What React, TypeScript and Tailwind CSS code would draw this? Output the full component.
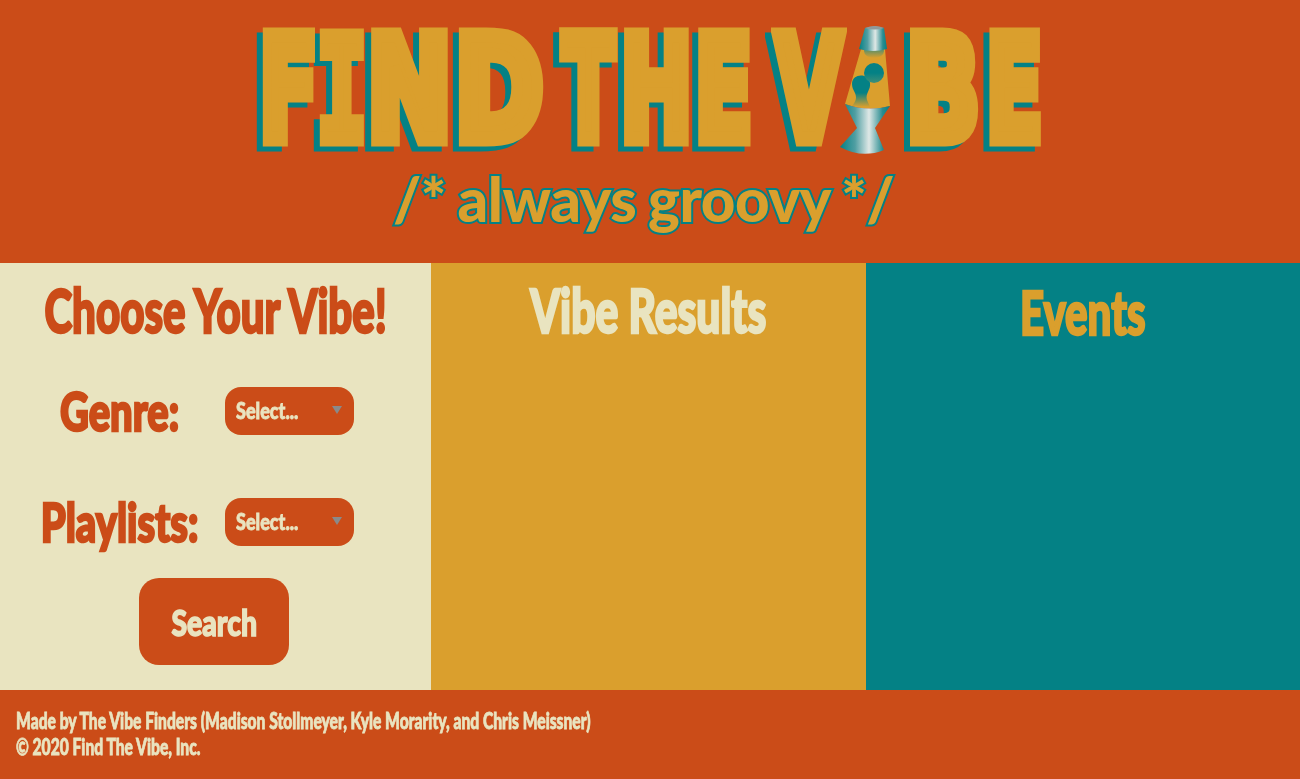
const selectOptions = ["Genre:", "Playlists:"];

function LavaLamp() {
  return (
    <svg width="80" height="145" viewBox="0 0 80 145" className="shrink-0 -ml-[19px] -mr-[7px] -mt-[10px]">
      <defs>
        <linearGradient id="metal" x1="0" y1="0" x2="1" y2="0">
          <stop offset="0" stopColor="#048185" />
          <stop offset="0.3" stopColor="#4f9ea2" />
          <stop offset="0.58" stopColor="#dfe8e6" />
          <stop offset="0.85" stopColor="#2a8d91" />
          <stop offset="1" stopColor="#048185" />
        </linearGradient>
        <linearGradient id="lavaBall" x1="0" y1="0" x2="0" y2="1">
          <stop offset="0.5" stopColor="#048185" />
          <stop offset="1" stopColor="#3f8f78" />
        </linearGradient>
        <linearGradient id="lavaFoot" x1="0" y1="0" x2="0" y2="1">
          <stop offset="0.55" stopColor="#048185" />
          <stop offset="1" stopColor="#da9f2d" />
        </linearGradient>
        <linearGradient id="lavaTop" x1="0" y1="0" x2="0" y2="1">
          <stop offset="0.2" stopColor="#2b8a80" />
          <stop offset="1" stopColor="#da9f2d" />
        </linearGradient>
      </defs>
      <path d="M31 29 Q43 33 55 29 L60 86 Q37 92 15 84 Z" fill="#da9f2d" />
      <ellipse cx="44" cy="31" rx="10" ry="7" fill="url(#lavaTop)" />
      <path
        d="M22 64 C22 53 39 53 40 63 C41 70 35 73 37 80 L40 87 L22 86 C28 79 26 75 24 71 C23 69 22 67 22 64 Z"
        fill="url(#lavaFoot)"
      />
      <circle cx="44" cy="53" r="10" fill="url(#lavaBall)" />
      <path d="M35 8 Q45 5 54 8 L57 29 Q43 33 29 29 Z" fill="url(#metal)" />
      <path d="M35 8 Q45 4 54 8 Q45 11 35 8 Z" fill="#8f9a9a" />
      <path d="M15 84 Q37 92 60 86 L45 108 L54 130 Q32 139 10 127 L27 108 Z" fill="url(#metal)" />
    </svg>
  );
}

function Logo() {
  return (
    <div className="flex pl-[262px] pt-[30px] h-[122px] items-start text-[#da9f2d] text-[142px] leading-[120px] font-bold [font-family:'DejaVu_Sans',sans-serif] [-webkit-text-stroke:15px_#da9f2d]">
      <div className="flex items-start drop-shadow-[-6px_5px_0_#048185]">
        <div className="w-[52px] flex justify-center"><span className="scale-x-[0.6]">F</span></div>
        <div className="w-[45px] ml-[5px] flex justify-center"><span className="mt-[8px] text-[156px] scale-x-[0.52] [font-family:'Liberation_Mono',monospace]">I</span></div>
        <div className="w-[79px] ml-[6px] flex justify-center"><span className="scale-x-[0.71]">N</span></div>
        <div className="w-[85px] ml-[7px] flex justify-center"><span className="scale-x-[0.75]">D</span></div>
        <div className="w-[58px] ml-[18px] flex justify-center"><span className="scale-x-[0.53]">T</span></div>
        <div className="w-[68px] ml-[5px] flex justify-center"><span className="scale-x-[0.6]">H</span></div>
        <div className="w-[53px] ml-[7px] flex justify-center"><span className="scale-x-[0.59]">E</span></div>
        <div className="w-[81px] ml-[18px] flex justify-center"><span className="scale-x-[0.6]">V</span></div>
      </div>
      <LavaLamp />
      <div className="flex items-start drop-shadow-[-6px_5px_0_#048185]">
        <div className="w-[80px] flex justify-center"><span className="scale-x-[0.68]">B</span></div>
        <div className="w-[52px] ml-[5px] flex justify-center"><span className="scale-x-[0.58]">E</span></div>
      </div>
    </div>
  );
}

function FakeSelect() {
  return (
    <div className="w-[129px] h-[48px] ml-[5px] rounded-2xl bg-[#cb4c18] flex items-center justify-between pl-[11px] pr-[12px] text-[#e9e4c0] text-[22px] font-black [-webkit-text-stroke:0.8px_#e9e4c0]">
      <span className="-mt-[1px] origin-left scale-x-[0.82]">Select...</span>
      <span className="w-0 h-0 border-x-[5px] border-x-transparent border-t-[8px] border-t-[#8a8a8a] -mt-[2px]" />
    </div>
  );
}

export default function App() {
  return (
    <div className="w-[1300px] h-[779px] flex flex-col overflow-hidden [font-family:Lato,sans-serif]">
      <header className="h-[263px] bg-[#cb4c18]">
        <Logo />
        <p className="mt-[41px] ml-[393px] text-[#da9f2d] text-[60px] leading-[72px] font-black whitespace-nowrap tracking-[-0.5px] [word-spacing:-2px] [-webkit-text-stroke:4px_#048185] [paint-order:stroke_fill]">
          /* always groovy */
        </p>
      </header>

      <main className="h-[427px] flex">
        <section className="w-[431px] bg-[#e9e4c0] flex flex-col items-center">
          <h2 className="mt-[18px] text-[#cb4c18] text-[60px] leading-[58px] font-black whitespace-nowrap scale-x-[0.7] [-webkit-text-stroke:2.5px_#cb4c18]">
            Choose Your Vibe!
          </h2>
          <div className="w-full mt-[48px] flex flex-col gap-[63px]">
            {selectOptions.map((label) => (
              <div key={label} className="flex items-center pl-[20px]">
                <div className="w-[200px] flex justify-center text-[#cb4c18] text-[54px] leading-[48px] font-black whitespace-nowrap">
                  <span className="scale-x-[0.74] [-webkit-text-stroke:2.5px_#cb4c18]">{label}</span>
                </div>
                <FakeSelect />
              </div>
            ))}
          </div>
          <button className="mt-[32px] -ml-[3px] w-[150px] h-[87px] rounded-[20px] bg-[#cb4c18] text-[#e9e4c0] text-[36px] font-black">
            <span className="inline-block scale-x-[0.79] [-webkit-text-stroke:1.5px_#e9e4c0]">Search</span>
          </button>
        </section>

        <section className="w-[435px] bg-[#da9f2d] flex justify-center">
          <h2 className="mt-[18px] text-[#e9e4c0] text-[60px] leading-[58px] font-black whitespace-nowrap scale-x-[0.71] [-webkit-text-stroke:2.5px_#e9e4c0]">
            Vibe Results
          </h2>
        </section>

        <section className="flex-1 bg-[#048185] flex justify-center">
          <h2 className="mt-[20px] text-[#da9f2d] text-[60px] leading-[58px] font-black whitespace-nowrap scale-x-[0.7] [-webkit-text-stroke:2.5px_#da9f2d]">
            Events
          </h2>
        </section>
      </main>

      <footer className="flex-1 bg-[#cb4c18] pl-[16px] pt-[18px] text-[#e9e4c0] text-[22px] leading-[26px] font-black whitespace-nowrap [-webkit-text-stroke:0.8px_#e9e4c0]">
        <p className="origin-left scale-x-[0.71]">Made by The Vibe Finders (Madison Stollmeyer, Kyle Morarity, and Chris Meissner)</p>
        <p className="origin-left scale-x-[0.71]">© 2020 Find The Vibe, Inc.</p>
      </footer>
    </div>
  );
}
